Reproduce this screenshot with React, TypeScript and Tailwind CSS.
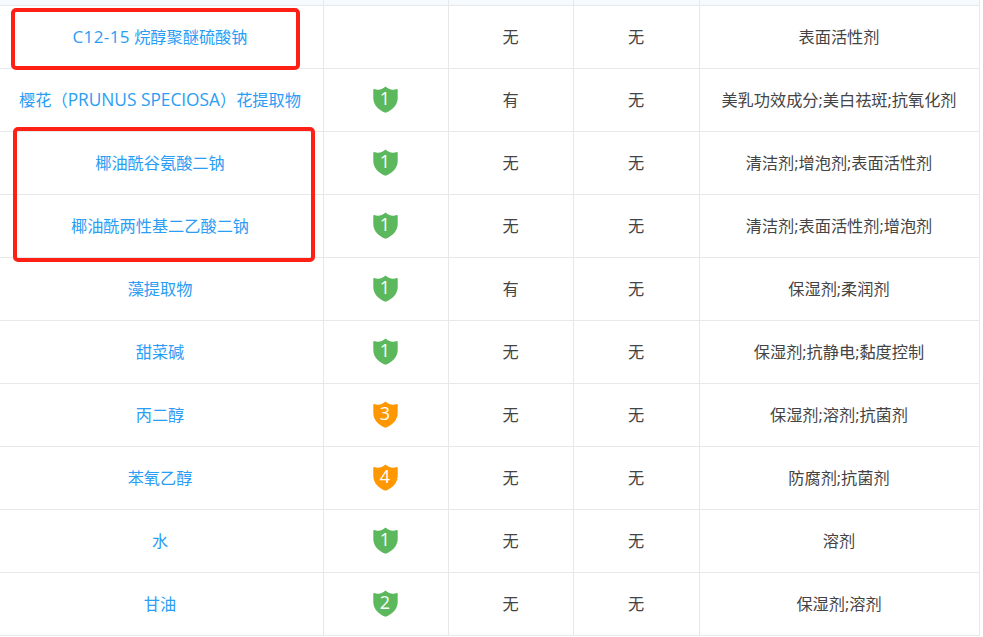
const rows = [
  { name: <><span className="text-[17px] tracking-[0.4px]">C12-15</span> 烷醇聚醚硫酸钠</>, score: 0, acne: "无", risk: "无", use: "表面活性剂" },
  { name: <>樱花（<span className="text-[17.3px]">PRUNUS SPECIOSA</span>）花提取物</>, score: 1, acne: "有", risk: "无", use: "美乳功效成分;美白祛斑;抗氧化剂" },
  { name: "椰油酰谷氨酸二钠", score: 1, acne: "无", risk: "无", use: "清洁剂;增泡剂;表面活性剂" },
  { name: "椰油酰两性基二乙酸二钠", score: 1, acne: "无", risk: "无", use: "清洁剂;表面活性剂;增泡剂" },
  { name: "藻提取物", score: 1, acne: "有", risk: "无", use: "保湿剂;柔润剂" },
  { name: "甜菜碱", score: 1, acne: "无", risk: "无", use: "保湿剂;抗静电;黏度控制" },
  { name: "丙二醇", score: 3, acne: "无", risk: "无", use: "保湿剂;溶剂;抗菌剂" },
  { name: "苯氧乙醇", score: 4, acne: "无", risk: "无", use: "防腐剂;抗菌剂" },
  { name: "水", score: 1, acne: "无", risk: "无", use: "溶剂" },
  { name: "甘油", score: 2, acne: "无", risk: "无", use: "保湿剂;溶剂" },
];

function Shield({ score }: { score: number }) {
  const fill = score >= 3 ? "#ff9800" : "#5cb85c";
  return (
    <div className="relative h-[27px] w-[25px] -translate-y-[1px]">
      <svg width="25" height="27" viewBox="0 0 25 27">
        <path
          d="M12.5 0.5C14.5 2.4 17 3.6 20 3.8C21.5 3.9 22.6 3.5 23.6 3.1C24.3 2.9 24.7 3.3 24.7 4V12C24.7 19 19.5 24 12.5 26.8C5.5 24 0.3 19 0.3 12V4C0.3 3.3 0.7 2.9 1.4 3.1C2.4 3.5 3.5 3.9 5 3.8C8 3.6 10.5 2.4 12.5 0.5Z"
          fill={fill}
        />
      </svg>
      <span className="absolute inset-x-0 top-[-1px] text-center text-[18px] leading-[26px] text-white">{score}</span>
    </div>
  );
}

export default function App() {
  const cell = "flex h-[63px] items-center justify-center border-r border-b border-[#e8e8e8] pr-[1px]";
  return (
    <div className="relative h-[637px] w-[983px] overflow-hidden bg-white font-['Open_Sans','Noto_Sans_CJK_SC',sans-serif] text-[16.2px] text-[#444]">
      <div className="grid w-[980px] grid-cols-[324px_125px_125px_126px_280px]">
        <div className="col-span-5 grid h-[6px] grid-cols-subgrid bg-[#f5faff]">
          <div className="border-r border-b border-[#e8e8e8]" />
          <div className="border-r border-b border-[#e8e8e8]" />
          <div className="border-r border-b border-[#e8e8e8]" />
          <div className="border-r border-b border-[#e8e8e8]" />
          <div className="border-r border-b border-[#e8e8e8]" />
        </div>
        {rows.map((r, i) => (
          <div key={i} className="col-span-5 grid grid-cols-subgrid">
            <div className="flex h-[63px] items-center justify-center whitespace-pre-wrap border-r border-b border-[#e8e8e8] pr-[3px] text-[#2a9df4]"><span>{r.name}</span></div>
            <div className={cell + " pr-[2px]"}>{r.score > 0 && <Shield score={r.score} />}</div>
            <div className={cell}>{r.acne}</div>
            <div className={cell}>{r.risk}</div>
            <div className={cell}>{r.use}</div>
          </div>
        ))}
      </div>
      <div className="absolute left-[11px] top-[8px] h-[62px] w-[289px] rounded-[5px] border-[4px] border-[#ff2015]" />
      <div className="absolute left-[13px] top-[127px] h-[135px] w-[302px] rounded-[5px] border-[4px] border-[#ff2015]" />
    </div>
  );
}
